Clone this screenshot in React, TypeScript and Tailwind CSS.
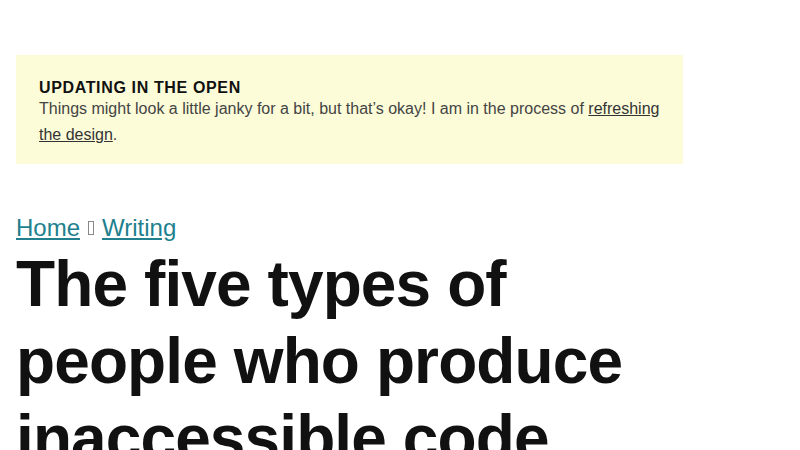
export default function App() {
  return (
    <div className="min-h-[450px] bg-white pl-4 pt-[55px]" style={{ fontFamily: '"Liberation Sans", Arial, sans-serif' }}>
      <div className="w-[667px]">
        <aside className="bg-[#fcfcd9] pl-[23px] pr-[18px] pt-[25px] pb-4">
          <p className="text-[16px] leading-[16px] font-bold tracking-[0.04em] text-[#111]">UPDATING IN THE OPEN</p>
          <p className="text-[16px] leading-[26px] text-[#444]">
            Things might look a little janky for a bit, but that’s okay! I am in the process of{' '}
            <a href="#" className="underline text-[#333]">refreshing the design</a>.
          </p>
        </aside>
        <nav className="mt-[46px] text-[24px] leading-[36px] text-[#555]">
          <a href="#" className="underline text-[#217f8e]">Home</a>
          <span className="mx-2 mb-[1px] inline-block h-[14px] w-[6px] border border-[#888] align-baseline"></span>
          <a href="#" className="underline text-[#217f8e]">Writing</a>
        </nav>
        <h1 className="text-[64px] leading-[77px] font-bold tracking-[-0.014em] text-[#111]">
          The five types of people who produce inaccessible code
        </h1>
      </div>
    </div>
  );
}
